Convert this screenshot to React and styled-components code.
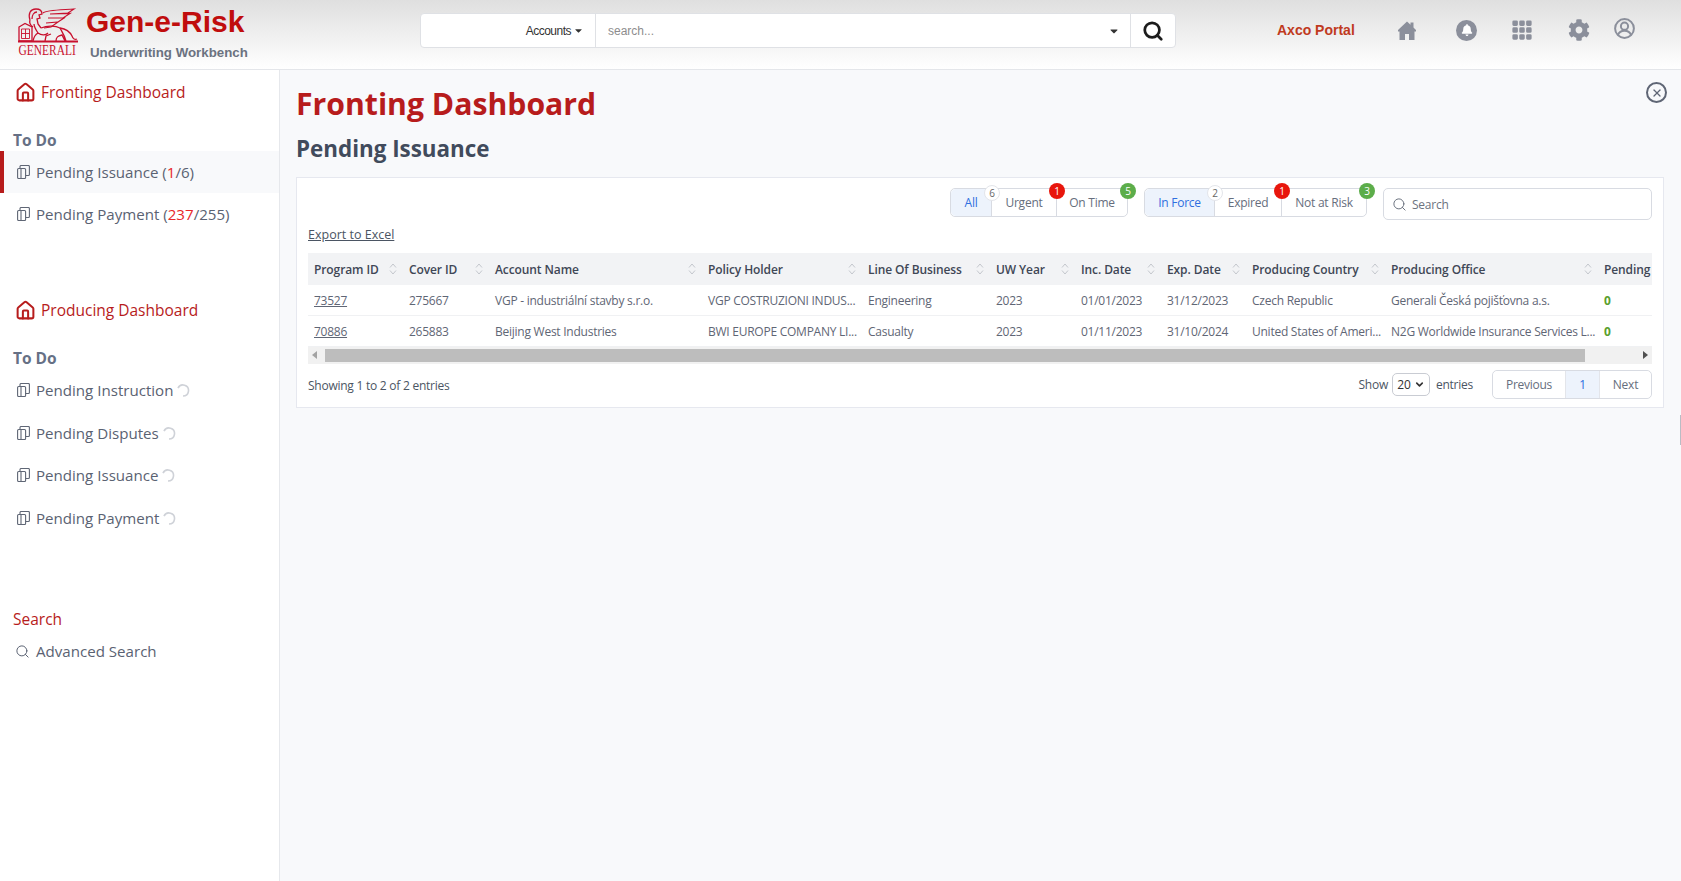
import React from 'react';
import styled, { createGlobalStyle } from 'styled-components';
import { FaCog, FaBell, FaCaretDown } from 'react-icons/fa';
import { BsGrid3X3GapFill } from 'react-icons/bs';
import { Home, Search as SearchIcon, X, ChevronDown } from 'lucide-react';

const GlobalStyle = createGlobalStyle`
  html, body { margin: 0; padding: 0; height: 100%; }
  body {
    font-family: "Open Sans", "Noto Sans", sans-serif;
    background: #f8f9fb;
    color: #4b5563;
  }
  * { box-sizing: border-box; }
`;

const RED = '#b71c1c';

const Page = styled.div`
  width: 1681px;
  height: 881px;
  display: flex;
  flex-direction: column;
  overflow: hidden;
  position: relative;
`;

const Header = styled.header`
  height: 70px;
  flex: none;
  display: flex;
  align-items: flex-start;
  background: linear-gradient(#dfdfdf 0%, #ffffff 100%);
  border-bottom: 1px solid #e4e6ea;
`;

const Brand = styled.div`
  width: 420px;
  flex: none;
  display: flex;
  padding: 8px 0 0 18px;
`;

const BrandText = styled.div`
  margin-left: 8px;
  font-family: "Liberation Sans", Arial, sans-serif;
  font-weight: 700;
`;

const BrandName = styled.div`
  font-size: 30px;
  line-height: 27px;
  color: #c00d0d;
`;

const BrandSub = styled.div`
  font-size: 13.3px;
  line-height: 16px;
  margin: 10px 0 0 4px;
  color: #6b7280;
`;

const SearchBar = styled.div`
  width: 756px;
  height: 35px;
  margin-top: 13px;
  display: flex;
  background: #fff;
  border: 1px solid #dfe1e5;
  border-radius: 4px;
  font-family: "Liberation Sans", Arial, sans-serif;
  font-size: 12px;
`;

const AccountsPick = styled.div`
  width: 175px;
  display: flex;
  align-items: center;
  justify-content: flex-end;
  gap: 2px;
  padding-right: 11px;
  border-right: 1px solid #dfe1e5;
  color: #333;
  letter-spacing: -0.5px;
`;

const SearchInput = styled.div`
  flex: 1;
  display: flex;
  align-items: center;
  justify-content: space-between;
  padding: 1px 10px 0 12px;
  color: #8d8d8d;
`;

const SearchGo = styled.div`
  width: 45px;
  display: flex;
  align-items: center;
  justify-content: center;
  border-left: 1px solid #dfe1e5;
  color: #1c1c1c;
`;

const HeadRight = styled.div`
  flex: 1;
  display: flex;
  align-items: center;
  height: 60px;
  padding-left: 101px;
  color: #8b8f9b;
`;

const PortalLink = styled.span`
  width: 121px;
  font-family: "Liberation Sans", Arial, sans-serif;
  font-weight: 700;
  font-size: 14px;
  color: #c03a1e;
`;

const HeadIcon = styled.span`
  width: ${(p) => p.$w}px;
  display: flex;
  justify-content: flex-start;
  align-items: center;
  margin-top: ${(p) => p.$top || 0}px;
`;

const BellDisc = styled.span`
  width: 21px;
  height: 21px;
  border-radius: 50%;
  background: #8b8f9b;
  color: #fff;
  display: flex;
  align-items: center;
  justify-content: center;
`;

const Body = styled.div`
  flex: 1;
  display: flex;
  min-height: 0;
`;

const Sidebar = styled.nav`
  width: 280px;
  flex: none;
  background: #fff;
  border-right: 1px solid #e6e8ec;
`;

const DashLink = styled.div`
  display: flex;
  align-items: center;
  gap: 5px;
  height: 24px;
  padding-left: 15px;
  margin-top: ${(p) => p.$top}px;
  font-size: 15.5px;
  color: ${RED};
`;

const SideHead = styled.div`
  padding-left: 13px;
  margin-top: ${(p) => p.$top}px;
  height: 22px;
  line-height: 22px;
  font-size: 15.5px;
  font-weight: ${(p) => (p.$red ? 500 : 700)};
  color: ${(p) => (p.$red ? RED : '#667085')};
`;

const SideRow = styled.div`
  display: flex;
  align-items: center;
  height: ${(p) => p.$h || 42}px;
  padding-left: ${(p) => (p.$active ? 13 : p.$wide ? 15 : 17)}px;
  gap: 6px;
  font-size: 15.1px;
  color: #5a6272;
  background: ${(p) => (p.$active ? '#f8f9fb' : 'transparent')};
  border-left: ${(p) => (p.$active ? `4px solid ${RED}` : 'none')};
`;

const Hot = styled.span`
  color: #e8262a;
`;

const Spin = styled.svg`
  margin-left: 0;
  vertical-align: -1px;
`;

const Main = styled.main`
  flex: 1;
  min-width: 0;
  position: relative;
  padding: 12px 17px 0 16px;
`;

const Title = styled.h1`
  margin: 0;
  font-size: 30.2px;
  line-height: 44px;
  font-weight: 700;
  color: ${RED};
`;

const SubTitle = styled.h2`
  margin: 7px 0 0;
  font-size: 22.4px;
  line-height: 32px;
  font-weight: 700;
  color: #414b5c;
`;

const CloseBtn = styled.span`
  position: absolute;
  top: 12px;
  right: 14px;
  width: 21px;
  height: 21px;
  border: 2px solid #5f6675;
  border-radius: 50%;
  color: #5f6675;
  display: flex;
  align-items: center;
  justify-content: center;
`;

const Card = styled.section`
  margin-top: 12px;
  height: 231px;
  background: #fff;
  border: 1px solid #e6e8ef;
  padding: 10px 11px 0;
  font-size: 12px;
  letter-spacing: -0.25px;
`;

const FilterRow = styled.div`
  display: flex;
  justify-content: flex-end;
  gap: 16px;
`;

const BtnGroup = styled.div`
  display: flex;
  height: 29px;
  border: 1px solid #d8dbe2;
  border-radius: 5px;
`;

const FilterBtn = styled.div`
  position: relative;
  width: ${(p) => p.$w}px;
  display: flex;
  align-items: center;
  justify-content: center;
  background: ${(p) => (p.$on ? '#edf3fc' : '#fff')};
  color: ${(p) => (p.$on ? '#2f6fe0' : '#666e7d')};
  border-left: ${(p) => (p.$first ? 'none' : '1px solid #d8dbe2')};
  border-radius: ${(p) => (p.$first ? '5px 0 0 5px' : p.$last ? '0 5px 5px 0' : '0')};
`;

const Badge = styled.span`
  position: absolute;
  top: ${(p) => (p.$bg === '#fff' ? -4 : -6)}px;
  right: -9px;
  width: 16px;
  height: 16px;
  border-radius: 50%;
  z-index: 1;
  display: flex;
  align-items: center;
  justify-content: center;
  font-size: 10px;
  letter-spacing: 0;
  background: ${(p) => p.$bg};
  color: ${(p) => p.$fg};
  border: ${(p) => (p.$bg === '#fff' ? '1px solid #e3e5ea' : 'none')};
`;

const FilterSearch = styled.div`
  width: 269px;
  height: 32px;
  display: flex;
  align-items: center;
  gap: 5px;
  padding-left: 8px;
  border: 1px solid #d8dbe2;
  border-radius: 5px;
  color: #6c7380;
`;

const ExportLink = styled.a`
  display: block;
  margin-top: 5px;
  height: 20px;
  line-height: 20px;
  font-size: 12.5px;
  letter-spacing: 0;
  color: #4b5563;
  text-decoration: underline;
`;

const TableWrap = styled.div`
  margin-top: 8px;
  overflow: hidden;
`;

const Table = styled.table`
  width: 1480px;
  table-layout: fixed;
  border-collapse: collapse;
`;

const Th = styled.th`
  position: relative;
  height: 32px;
  padding: 0 0 0 6px;
  background: #f2f3f5;
  text-align: left;
  font-weight: 600;
  letter-spacing: -0.1px;
  color: #3f4756;
  white-space: nowrap;
`;

const SortMark = styled.svg`
  position: absolute;
  right: 6px;
  top: 10px;
`;

const Td = styled.td`
  height: ${(p) => p.$h}px;
  padding: 2px 0 0 6px;
  white-space: nowrap;
  overflow: hidden;
  color: #5f6675;
  border-bottom: 1px solid #f0f1f3;
`;

const IdLink = styled.a`
  color: #5f6675;
  text-decoration: underline;
`;

const Zero = styled.span`
  color: #5aa02c;
  font-weight: 700;
`;

const Scrollbar = styled.div`
  height: 17px;
  display: flex;
  align-items: center;
  gap: 6px;
  padding: 0 4px;
  background: #f1f1f1;
`;

const ScrollThumb = styled.div`
  flex: 1;
  height: 13px;
  margin: 0 52px 0 2px;
  background: #bdbdbd;
`;

const Arrow = styled.span`
  width: 0;
  height: 0;
  border-top: 4px solid transparent;
  border-bottom: 4px solid transparent;
  ${(p) => (p.$left ? 'border-right: 5px solid #a3a3a3;' : 'border-left: 5px solid #505050;')}
`;

const FooterRow = styled.div`
  margin-top: 6px;
  display: flex;
  align-items: center;
  justify-content: space-between;
`;

const EntryInfo = styled.span`
  padding-top: 3px;
`;

const PagerSide = styled.div`
  display: flex;
  align-items: center;
`;

const PageSize = styled.span`
  width: 38px;
  height: 23px;
  margin: 0 6px 0 4px;
  display: flex;
  align-items: center;
  justify-content: center;
  gap: 3px;
  border: 1px solid #c9ccd3;
  border-radius: 5px;
  color: #333;
`;

const Pager = styled.div`
  display: flex;
  height: 29px;
  margin-left: 19px;
  border: 1px solid #d8dbe2;
  border-radius: 5px;
`;

const PageBtn = styled.span`
  width: ${(p) => p.$w}px;
  display: flex;
  align-items: center;
  justify-content: center;
  background: ${(p) => (p.$on ? '#edf3fc' : '#fff')};
  color: ${(p) => (p.$on ? '#2f6fe0' : '#666e7d')};
  border-left: ${(p) => (p.$first ? 'none' : '1px solid #e3e5ea')};
  border-radius: ${(p) => (p.$first ? '5px 0 0 5px' : p.$last ? '0 5px 5px 0' : '0')};
`;

const EdgeTick = styled.span`
  position: absolute;
  right: 0;
  top: 415px;
  width: 1px;
  height: 30px;
  background: #b9bcc4;
`;

// stacked sheets icon used by every to-do row
const SheetsIcon = () => (
  <svg width="13" height="14" viewBox="0 0 13 14" fill="none" stroke="#5f6675" strokeWidth="1.1">
    <rect x="0.6" y="3.5" width="8" height="10" rx="1" />
    <path d="M4 3.5v10" />
    <path d="M3 3.5V1.5a1 1 0 0 1 1-1h7.4a1 1 0 0 1 1 1v8a1 1 0 0 1-1 1H8.6" />
  </svg>
);

const Spinner = () => (
  <Spin width="13" height="13" viewBox="0 0 13 13" fill="none" stroke="#cfd2d8" strokeWidth="1.6">
    <path d="M1 4.2A5.5 5.5 0 1 1 6 12" />
  </Spin>
);

const HouseIcon = () => (
  <svg width="18" height="19" viewBox="0 0 18 19" fill="#8b8f9b">
    <path d="M9 .5l3.5 3.3V1.500h3v5.100L18 9v1.500h-1.500V19H11v-6H7v6H1.500v-8.500H0V9z" />
  </svg>
);

const UserIcon = () => (
  <svg width="21" height="21" viewBox="0 0 21 21" fill="none" stroke="#8b8f9b" strokeWidth="2">
    <circle cx="10.5" cy="10.5" r="9.4" />
    <circle cx="10.5" cy="8.2" r="3.6" />
    <path d="M4 17c1-3 3.500-4.200 6.500-4.200S16 14 17 17" />
  </svg>
);

// rough Generali winged lion; lettering stays real text
const LionLogo = () => (
  <svg width="60" height="49" viewBox="0 0 60 49" fill="none" stroke="#c8102e" strokeWidth="1.3">
    <path d="M12 12C10 6 12 1 18 1c4 0 6 2 6 5l-3 1 1 3-3 1 1 5 3 4" />
    <path d="M14 11c0-4 2-7 5-7M12 12c-1 3 0 5 3 7M16 16c0 3 2 6 4 9" />
    <path d="M25 5c3-3 15-3 31-4l-6 4-18 1 20-.5-7 4.500H30l16 0-6 4-12 1 12-1-7 5-7 1" strokeWidth="1.2" />
    <path d="M23 20c7-3 15-2 19 0 6 1 10 4 12 8 1 3 3 4 5 3" />
    <path d="M20 25c4 3 8 2 10 0M15 33c1-5 3-7 5-8M27 33l1-5 5-2M38 33c0-4 2-5 6-6l3 6M42 20c2 4 4 6 6 13" />
    <path d="M1 19l6-3.500 7 3.500v14H1z" />
    <path d="M3.500 21h8v9.500h-8zM7.500 21v9.500M3.500 25.500h8" strokeWidth="0.9" />
    <path d="M0 33.500h60" strokeWidth="1.8" />
    <text x="0.5" y="47" transform="scale(0.82 1)" fill="#c8102e" stroke="none" fontFamily="Liberation Serif, serif" fontSize="14">GENERALI</text>
  </svg>
);

const SortIcon = () => (
  <SortMark width="8" height="12" viewBox="0 0 8 12" fill="none" stroke="#c4c7cd" strokeWidth="1">
    <path d="M1 4.500L4 1l3 3.500M1 7.500L4 11l3-3.500" />
  </SortMark>
);

const COLUMNS = [
  ['Program ID', 95],
  ['Cover ID', 86],
  ['Account Name', 213],
  ['Policy Holder', 160],
  ['Line Of Business', 128],
  ['UW Year', 85],
  ['Inc. Date', 86],
  ['Exp. Date', 85],
  ['Producing Country', 139],
  ['Producing Office', 213],
  ['Pending', 190],
];

const ROWS = [
  ['73527', '275667', 'VGP - industriální stavby s.r.o.', 'VGP COSTRUZIONI INDUS...', 'Engineering', '2023', '01/01/2023', '31/12/2023', 'Czech Republic', 'Generali Česká pojišťovna a.s.', '0'],
  ['70886', '265883', 'Beijing West Industries', 'BWI EUROPE COMPANY LI...', 'Casualty', '2023', '01/11/2023', '31/10/2024', 'United States of Ameri...', 'N2G Worldwide Insurance Services L...', '0'],
];

const GROUPS = [
  [
    { label: 'All', w: 40, on: true, count: 6, bg: '#fff', fg: '#666' },
    { label: 'Urgent', w: 65, count: 1, bg: '#e8160c', fg: '#fff' },
    { label: 'On Time', w: 71, count: 5, bg: '#5cad4a', fg: '#fff' },
  ],
  [
    { label: 'In Force', w: 69, on: true, count: 2, bg: '#fff', fg: '#666' },
    { label: 'Expired', w: 67, count: 1, bg: '#e8160c', fg: '#fff' },
    { label: 'Not at Risk', w: 85, count: 3, bg: '#5cad4a', fg: '#fff' },
  ],
];

const TodoRow = ({ children, active, h }) => (
  <SideRow $active={active} $h={h}>
    <SheetsIcon />
    <span>{children}</span>
  </SideRow>
);

const App = () => (
  <Page>
    <GlobalStyle />
    <Header>
      <Brand>
        <LionLogo />
        <BrandText>
          <BrandName>Gen-e-Risk</BrandName>
          <BrandSub>Underwriting Workbench</BrandSub>
        </BrandText>
      </Brand>
      <SearchBar>
        <AccountsPick>
          Accounts <FaCaretDown size={11} />
        </AccountsPick>
        <SearchInput>
          search...
          <FaCaretDown size={12} color="#333" />
        </SearchInput>
        <SearchGo>
          <SearchIcon size={22} strokeWidth={3} />
        </SearchGo>
      </SearchBar>
      <HeadRight>
        <PortalLink>Axco Portal</PortalLink>
        <HeadIcon $w={58}>
          <HouseIcon />
        </HeadIcon>
        <HeadIcon $w={55}>
          <BellDisc>
            <FaBell size={12} />
          </BellDisc>
        </HeadIcon>
        <HeadIcon $w={57}>
          <BsGrid3X3GapFill size={22} />
        </HeadIcon>
        <HeadIcon $w={46}>
          <FaCog size={22} />
        </HeadIcon>
        <HeadIcon $w={24} $top={-3}>
          <UserIcon />
        </HeadIcon>
      </HeadRight>
    </Header>
    <Body>
      <Sidebar>
        <DashLink $top={10}>
          <Home size={21} strokeWidth={2.3} />
          Fronting Dashboard
        </DashLink>
        <SideHead $top={25}>To Do</SideHead>
        <TodoRow active>
          Pending Issuance (<Hot>1</Hot>/6)
        </TodoRow>
        <TodoRow>
          Pending Payment (<Hot>237</Hot>/255)
        </TodoRow>
        <DashLink $top={63}>
          <Home size={21} strokeWidth={2.3} />
          Producing Dashboard
        </DashLink>
        <SideHead $top={25}>To Do</SideHead>
        <TodoRow>
          Pending Instruction <Spinner />
        </TodoRow>
        <TodoRow h={43}>
          Pending Disputes <Spinner />
        </TodoRow>
        <TodoRow>
          Pending Issuance <Spinner />
        </TodoRow>
        <TodoRow h={43}>
          Pending Payment <Spinner />
        </TodoRow>
        <SideHead $top={69} $red>
          Search
        </SideHead>
        <SideRow $h={42} $wide>
          <SearchIcon size={15} strokeWidth={1.6} />
          Advanced Search
        </SideRow>
      </Sidebar>
      <Main>
        <Title>Fronting Dashboard</Title>
        <SubTitle>Pending Issuance</SubTitle>
        <CloseBtn>
          <X size={12} strokeWidth={2.6} />
        </CloseBtn>
        <Card>
          <FilterRow>
            {GROUPS.map((group, i) => (
              <BtnGroup key={i}>
                {group.map((btn, j) => (
                  <FilterBtn key={btn.label} $w={btn.w} $on={btn.on} $first={j === 0} $last={j === group.length - 1}>
                    {btn.label}
                    <Badge $bg={btn.bg} $fg={btn.fg}>
                      {btn.count}
                    </Badge>
                  </FilterBtn>
                ))}
              </BtnGroup>
            ))}
            <FilterSearch>
              <SearchIcon size={15} strokeWidth={1.6} />
              Search
            </FilterSearch>
          </FilterRow>
          <ExportLink>Export to Excel</ExportLink>
          <TableWrap>
            <Table>
              <colgroup>
                {COLUMNS.map(([name, w]) => (
                  <col key={name} width={w} />
                ))}
              </colgroup>
              <thead>
                <tr>
                  {COLUMNS.map(([name]) => (
                    <Th key={name}>
                      {name}
                      <SortIcon />
                    </Th>
                  ))}
                </tr>
              </thead>
              <tbody>
                {ROWS.map((row, r) => (
                  <tr key={row[0]}>
                    {row.map((cell, c) => (
                      <Td key={c} $h={r === 0 ? 30 : 31}>
                        {c === 0 ? <IdLink>{cell}</IdLink> : c === 10 ? <Zero>{cell}</Zero> : cell}
                      </Td>
                    ))}
                  </tr>
                ))}
              </tbody>
            </Table>
            <Scrollbar>
              <Arrow $left />
              <ScrollThumb />
              <Arrow />
            </Scrollbar>
          </TableWrap>
          <FooterRow>
            <EntryInfo>Showing 1 to 2 of 2 entries</EntryInfo>
            <PagerSide>
              Show
              <PageSize>
                20 <ChevronDown size={11} strokeWidth={3.5} />
              </PageSize>
              entries
              <Pager>
                <PageBtn $w={72} $first>
                  Previous
                </PageBtn>
                <PageBtn $w={34} $on>
                  1
                </PageBtn>
                <PageBtn $w={52} $last>
                  Next
                </PageBtn>
              </Pager>
            </PagerSide>
          </FooterRow>
        </Card>
      </Main>
    </Body>
    <EdgeTick />
  </Page>
);

export default App;
